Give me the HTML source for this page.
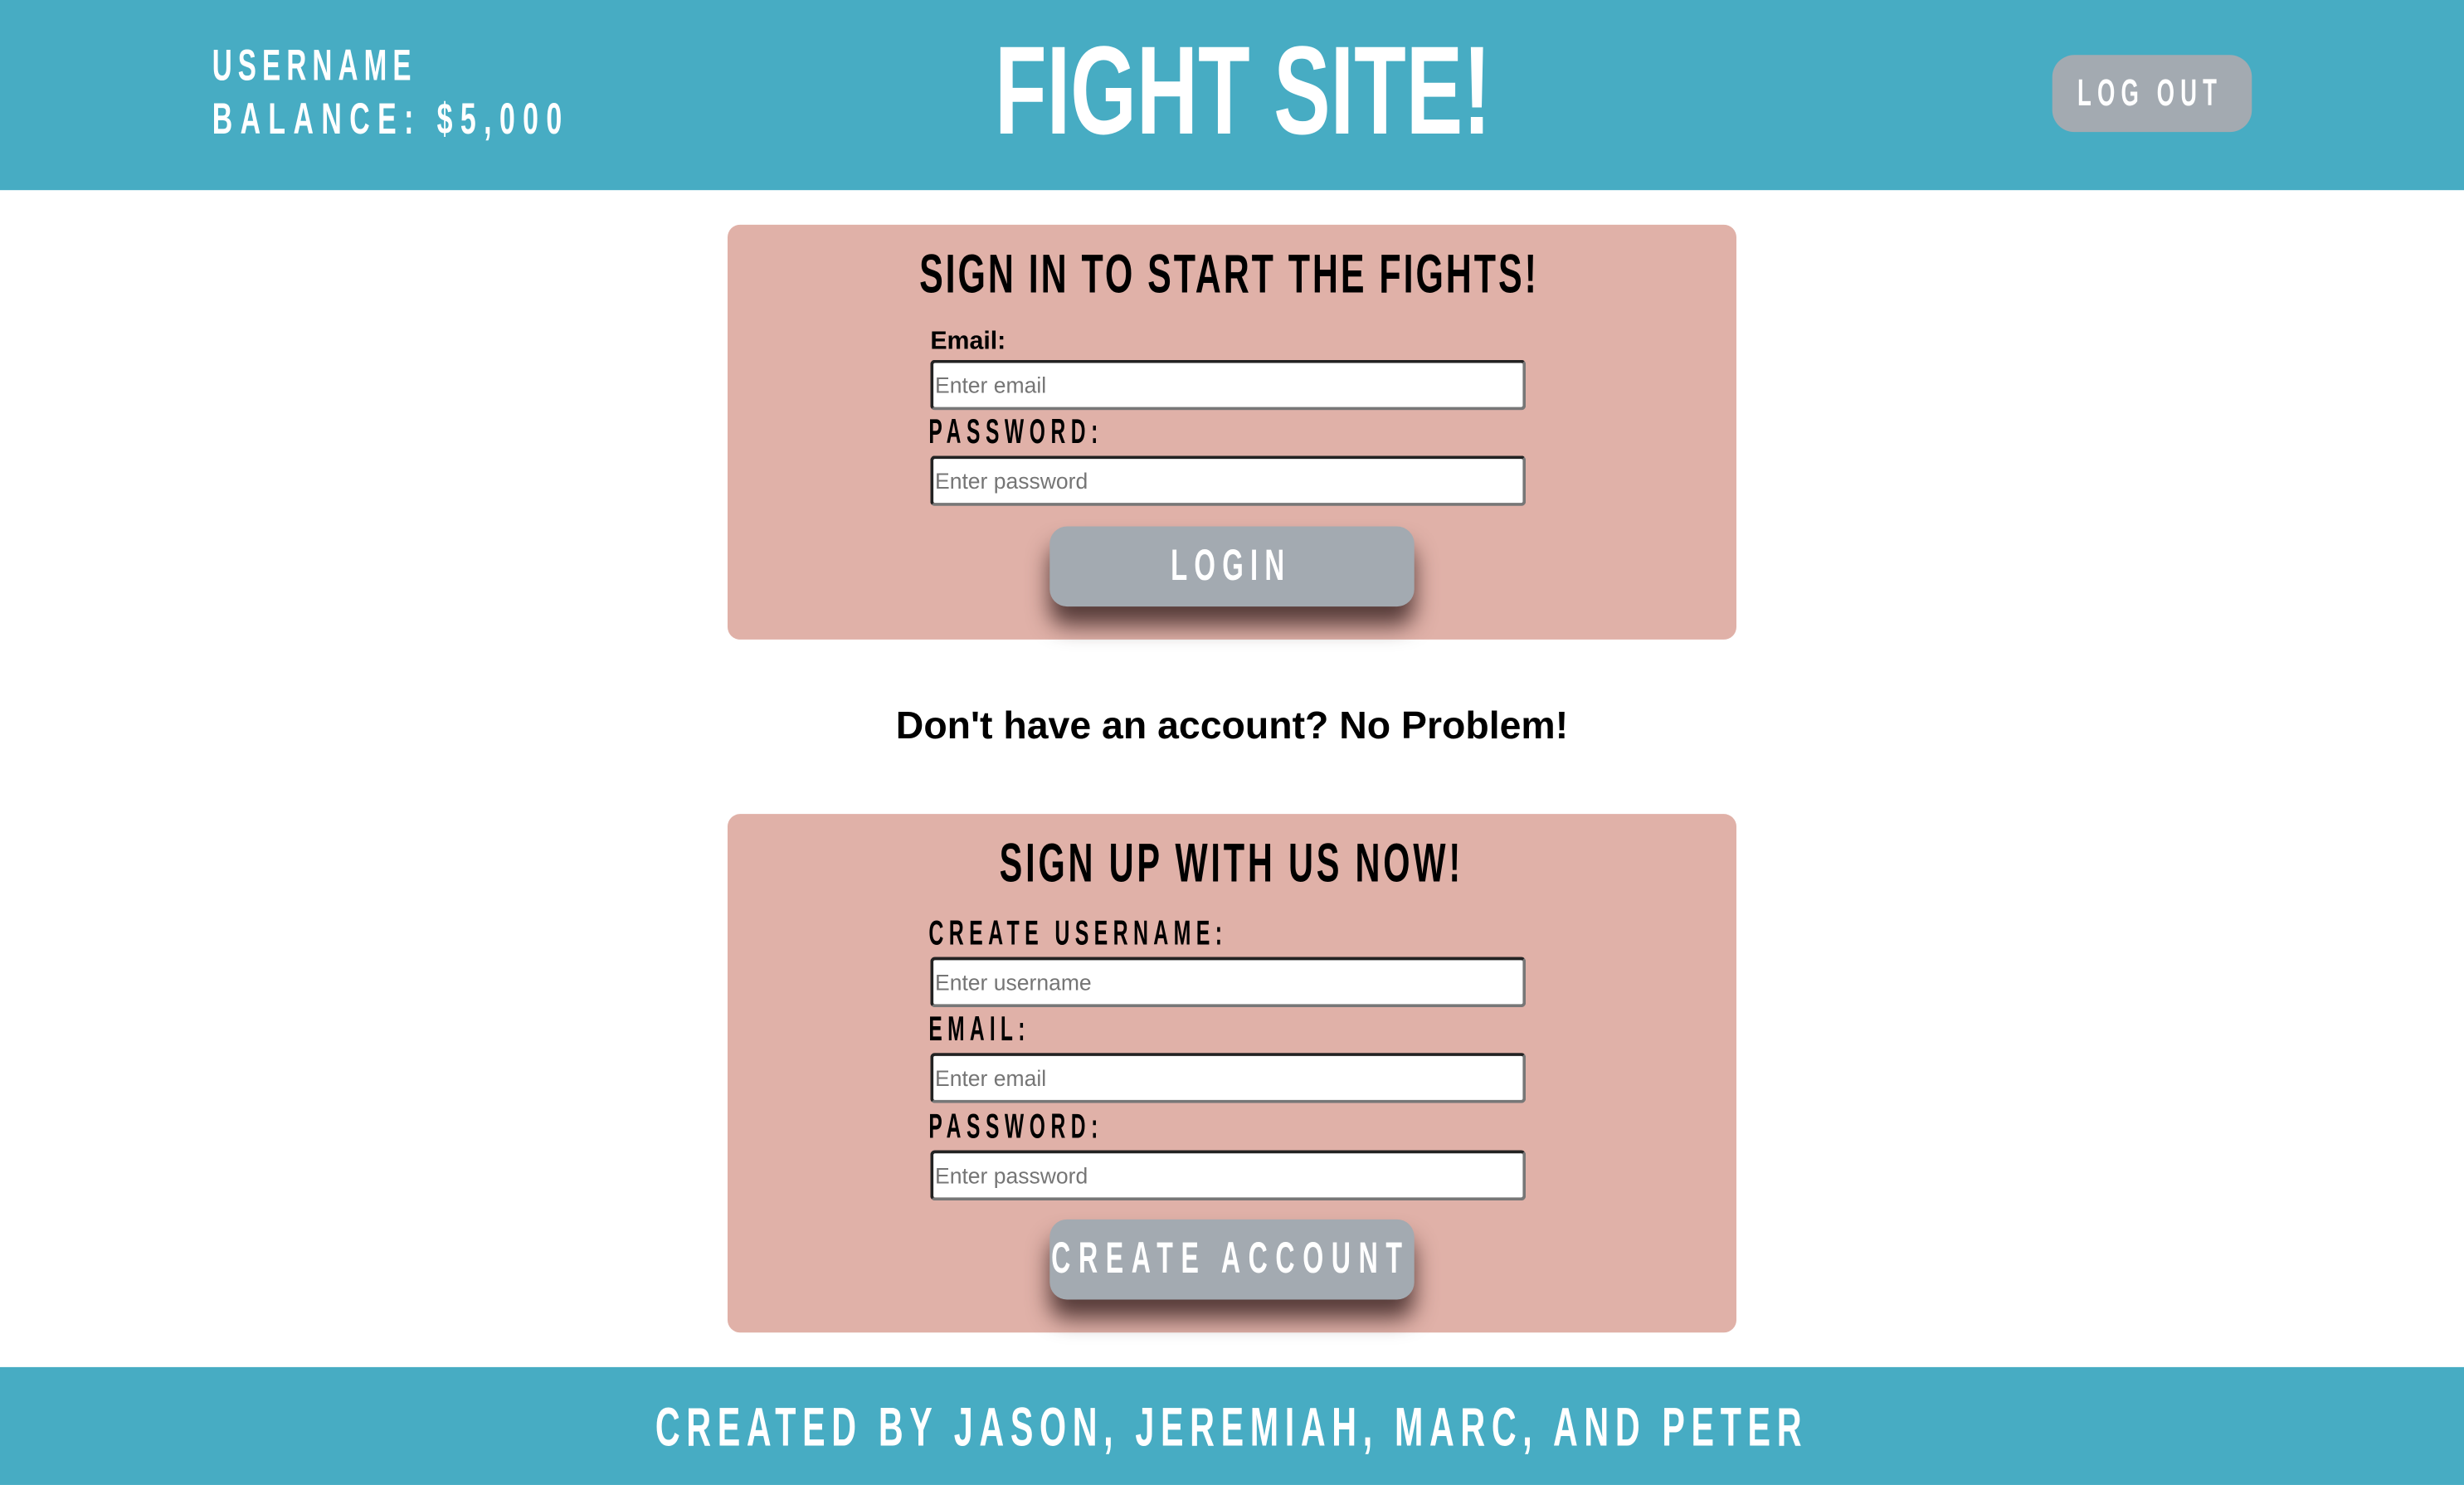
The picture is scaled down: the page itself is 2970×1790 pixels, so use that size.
<!DOCTYPE html>
<html><head><meta charset="utf-8"><style>
html,body{margin:0;padding:0;width:2970px;height:1790px;overflow:hidden;background:#fff}
#w{position:absolute;left:0;top:0;width:1568px;height:945px;transform:scale(1.89413);transform-origin:0 0;background:#fff}
.t{position:absolute;white-space:nowrap;font-family:"Liberation Sans Narrow","Liberation Sans",sans-serif;font-weight:bold;line-height:1;transform-origin:0 0}
.w{color:#fff}
.card{position:absolute;left:463px;width:642px;background:#e0b1a8;border-radius:8px}
.in{position:absolute;left:592px;width:375px;height:28px;background:#fff;border:2px solid #222;border-bottom-color:#777;border-right-color:#777;border-radius:3px;font:14px "Liberation Sans",sans-serif;color:#757575;line-height:28px;padding-left:0px}
.in span{position:absolute;left:1px;top:0}
.btn{position:absolute;background:#a3aab1;border-radius:11px;box-shadow:0 12px 14px rgba(40,20,20,.75)}
</style></head><body><div id="w">
<div style="position:absolute;left:0;top:0;width:1568px;height:121px;background:#47acc3"></div>
<div class="t w" style="left:135px;top:28.4px;font-size:28px;letter-spacing:6px;transform:scaleX(.626)">USERNAME</div>
<div class="t w" style="left:135px;top:62.4px;font-size:28px;letter-spacing:7.8px;transform:scaleX(.638)">BALANCE: $5,000</div>
<div class="t w" style="left:633px;top:17.6px;font-size:80px;transform:scaleX(.677)">FIGHT SITE!</div>
<div class="btn" style="left:1306px;top:35px;width:127px;height:49px;border-radius:14px;box-shadow:none"></div>
<div class="t w" style="left:1322px;top:48px;font-size:24px;letter-spacing:6.2px;transform:scaleX(.605)">LOG OUT</div>

<div class="card" style="top:143px;height:264px"></div>
<div class="t" style="left:585px;top:156.5px;font-size:35px;letter-spacing:2.4px;transform:scaleX(.648)">SIGN IN TO START THE FIGHTS!</div>
<div style="position:absolute;left:592px;top:209px;font:bold 16px 'Liberation Sans',sans-serif">Email:</div>
<div class="in" style="top:229px"><span>Enter email</span></div>
<div class="t" style="left:591px;top:264px;font-size:22px;letter-spacing:5.9px;transform:scaleX(.59)">PASSWORD:</div>
<div class="in" style="top:290px"><span>Enter password</span></div>
<div class="btn" style="left:668px;top:335px;width:232px;height:51px"></div>
<div class="t w" style="left:745px;top:346px;font-size:28px;letter-spacing:7px;transform:scaleX(.62)">LOGIN</div>

<div style="position:absolute;left:0;width:1568px;text-align:center;top:451px;font:bold 24.5px/1 'Liberation Sans',sans-serif;color:#000">Don't have an account? No Problem!</div>

<div class="card" style="top:518px;height:330px"></div>
<div class="t" style="left:636px;top:531.5px;font-size:35px;letter-spacing:3.2px;transform:scaleX(.626)">SIGN UP WITH US NOW!</div>
<div class="t" style="left:591px;top:583px;font-size:22px;letter-spacing:5.6px;transform:scaleX(.598)">CREATE USERNAME:</div>
<div class="in" style="top:609px"><span>Enter username</span></div>
<div class="t" style="left:591px;top:644px;font-size:22px;letter-spacing:5.6px;transform:scaleX(.59)">EMAIL:</div>
<div class="in" style="top:670px"><span>Enter email</span></div>
<div class="t" style="left:591px;top:706px;font-size:22px;letter-spacing:5.9px;transform:scaleX(.59)">PASSWORD:</div>
<div class="in" style="top:732px"><span>Enter password</span></div>
<div class="btn" style="left:668px;top:776px;width:232px;height:51px"></div>
<div class="t w" style="left:669px;top:787px;font-size:28px;letter-spacing:8.4px;transform:scaleX(.605)">CREATE ACCOUNT</div>

<div style="position:absolute;left:0;top:870px;width:1568px;height:75px;background:#47acc3"></div>
<div class="t w" style="left:417px;top:890.5px;font-size:35px;letter-spacing:6.5px;transform:scaleX(.622)">CREATED BY JASON, JEREMIAH, MARC, AND PETER</div>
</div></body></html>
